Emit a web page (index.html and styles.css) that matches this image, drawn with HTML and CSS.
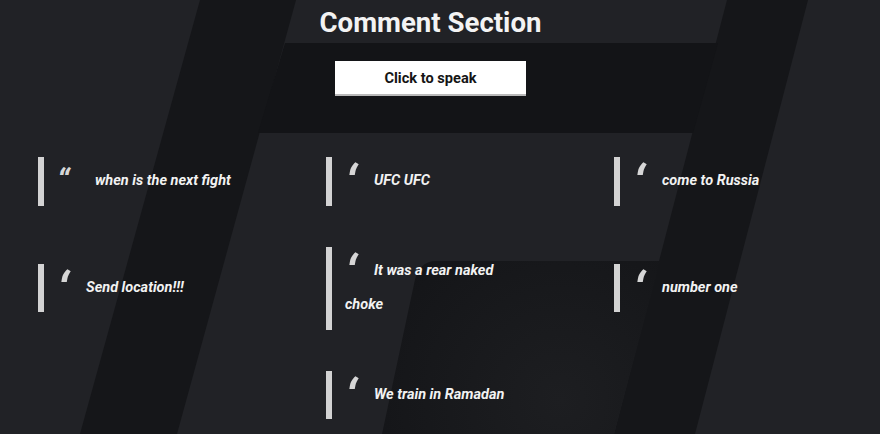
FILE: index.html
```html
<!DOCTYPE html>
<html lang="en">
<head>
<meta charset="utf-8">
<title>Comment Section</title>
<link rel="stylesheet" href="styles.css">
</head>
<body>
<svg class="bg" viewBox="0 0 880 434" preserveAspectRatio="none" aria-hidden="true">
  <defs>
    <radialGradient id="glow" cx="560" cy="400" r="200" gradientUnits="userSpaceOnUse">
      <stop offset="0" stop-color="#1d1e21"/>
      <stop offset="1" stop-color="#141518"/>
    </radialGradient>
  </defs>
  <rect width="880" height="434" fill="#212226"/>
  <polygon points="200,0 296,0 177,434 80,434" fill="#151619"/>
  <polygon points="727,0 808,0 695,434 614,434" fill="#151619"/>
  <polygon points="285,43 718,43 693,133 258,133" fill="#131417"/>
  <path d="M436,261 L660,261 L614,434 L382,434 L414,284 Q418,261 436,261 Z" fill="url(#glow)"/>
</svg>
<div class="page">
  <header class="top">
    <h1 class="title">Comment Section</h1>
    <button class="speak" type="button">Click to speak</button>
  </header>
  <main class="comments">
    <blockquote class="card card-first">when is the next fight</blockquote>
    <blockquote class="card">UFC UFC</blockquote>
    <blockquote class="card">come to Russia</blockquote>
    <blockquote class="card">Send location!!!</blockquote>
    <blockquote class="card">It was a rear naked choke</blockquote>
    <blockquote class="card">number one</blockquote>
    <blockquote class="card card-mid">We train in Ramadan</blockquote>
  </main>
</div>
</body>
</html>
```
FILE: styles.css
```css
html, body {
  margin: 0;
  padding: 0;
}

body {
  width: 880px;
  height: 434px;
  overflow: hidden;
  background: #212226;
  font-family: Roboto, "Liberation Sans", sans-serif;
  position: relative;
}

.bg {
  position: absolute;
  left: 0;
  top: 0;
  width: 880px;
  height: 434px;
  z-index: 0;
}

.page {
  position: relative;
  z-index: 1;
}

.top {
  width: 861px;
  display: flex;
  flex-direction: column;
  align-items: center;
}

.title {
  margin: 7px 0 0;
  font-size: 27.6px;
  line-height: 31px;
  font-weight: 700;
  color: #f3f3f3;
}

.speak {
  margin-top: 23px;
  width: 191px;
  height: 35px;
  padding: 0;
  background: #ffffff;
  border: none;
  border-bottom: 2px solid #b9b9b9;
  font-family: Roboto, "Liberation Sans", sans-serif;
  font-size: 14.6px;
  font-weight: 700;
  color: #151515;
}

.comments {
  display: grid;
  grid-template-columns: repeat(3, 288px);
  align-items: center;
  row-gap: 41px;
  margin-top: 61px;
  padding-left: 38px;
}

.card {
  width: 214px;
  box-sizing: border-box;
  margin: 0;
  padding: 7px 13px;
  border-left: 6px solid #d3d3d3;
  font-size: 14.5px;
  line-height: 34.5px;
  font-weight: 700;
  font-style: italic;
  color: #f2f2f2;
}

.card-mid {
  grid-column: 2;
}

.card::before {
  content: "‘";
  display: inline-block;
  width: 29px;
  height: 0;
  font-size: 50px;
  line-height: 0;
  vertical-align: -16px;
  color: #d6d6d6;
}

.card-first::before {
  content: "“";
  width: 38px;
  font-size: 32px;
  vertical-align: -6px;
}
```
